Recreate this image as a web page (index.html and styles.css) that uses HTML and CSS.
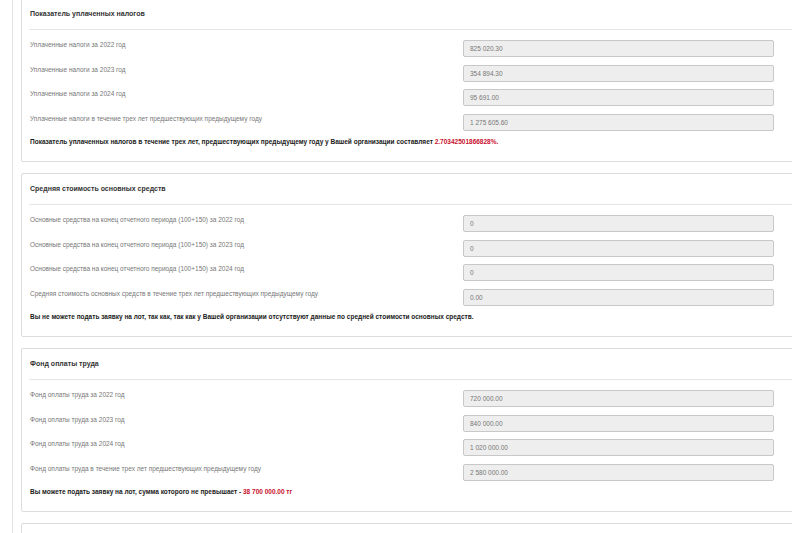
FILE: index.html
```html
<!DOCTYPE html>
<html>
  <head>
    <title>Показатели организации</title>
    <link rel="stylesheet" href="styles.css">
  </head>
  <body>
    <div class="page">
      <div class="panel">
        <div class="panel-heading">Показатель уплаченных налогов</div>
        <div class="panel-body">
          <div class="field-row">
            <label class="field-label">Уплаченные налоги за 2022 год</label>
            <div class="field-input">825 020.30</div>
          </div>
          <div class="field-row">
            <label class="field-label">Уплаченные налоги за 2023 год</label>
            <div class="field-input">354 894.30</div>
          </div>
          <div class="field-row">
            <label class="field-label">Уплаченные налоги за 2024 год</label>
            <div class="field-input">95 691.00</div>
          </div>
          <div class="field-row">
            <label class="field-label">Уплаченные налоги в течение трех лет предшествующих предыдущему году</label>
            <div class="field-input">1 275 605.60</div>
          </div>
          <p class="summary">Показатель уплаченных налогов в течение трех лет, предшествующих предыдущему году у Вашей организации составляет <span class="accent">2.70342501866828%.</span></p>
        </div>
      </div>

      <div class="panel">
        <div class="panel-heading">Средняя стоимость основных средств</div>
        <div class="panel-body">
          <div class="field-row">
            <label class="field-label">Основные средства на конец отчетного периода (100+150) за 2022 год</label>
            <div class="field-input">0</div>
          </div>
          <div class="field-row">
            <label class="field-label">Основные средства на конец отчетного периода (100+150) за 2023 год</label>
            <div class="field-input">0</div>
          </div>
          <div class="field-row">
            <label class="field-label">Основные средства на конец отчетного периода (100+150) за 2024 год</label>
            <div class="field-input">0</div>
          </div>
          <div class="field-row">
            <label class="field-label">Средняя стоимость основных средств в течение трех лет предшествующих предыдущему году</label>
            <div class="field-input">0.00</div>
          </div>
          <p class="summary">Вы не можете подать заявку на лот, так как, так как у Вашей организации отсутствуют данные по средней стоимости основных средств.</p>
        </div>
      </div>

      <div class="panel">
        <div class="panel-heading">Фонд оплаты труда</div>
        <div class="panel-body">
          <div class="field-row">
            <label class="field-label">Фонд оплаты труда за 2022 год</label>
            <div class="field-input">720 000.00</div>
          </div>
          <div class="field-row">
            <label class="field-label">Фонд оплаты труда за 2023 год</label>
            <div class="field-input">840 000.00</div>
          </div>
          <div class="field-row">
            <label class="field-label">Фонд оплаты труда за 2024 год</label>
            <div class="field-input">1 020 000.00</div>
          </div>
          <div class="field-row">
            <label class="field-label">Фонд оплаты труда в течение трех лет предшествующих предыдущему году</label>
            <div class="field-input">2 580 000.00</div>
          </div>
          <p class="summary">Вы можете подать заявку на лот, сумма которого не превышает - <span class="accent">38 700 000.00 тг</span></p>
        </div>
      </div>

      <div class="panel">
        <div class="panel-heading">&nbsp;</div>
      </div>
    </div>
  </body>
</html>
```

FILE: styles.css
```css
body {
  margin: 0;
  background-color: white;
  font-family: "Liberation Sans", Arial, Helvetica, sans-serif;
  overflow: hidden;
}

.page {
  margin-top: -2px;
  margin-left: 12px;
  padding-left: 8px;
  border-left: 1px solid #e4e4e4;
  min-height: 600px;
}

.panel {
  border: 1px solid #dcdcdc;
  border-radius: 2px;
  margin-right: -40px;
  margin-bottom: 11px;
  background-color: white;
}

.panel-heading {
  height: 30px;
  line-height: 30px;
  margin-left: 7px;
  padding-left: 1px;
  border-bottom: 1px solid #e6e6e6;
  font-size: 7px;
  font-weight: bold;
  color: #333;
}

.panel-body {
  padding: 10px 8px 14px 8px;
}

.field-row {
  display: grid;
  grid-template-columns: 433px 311px;
  margin-bottom: 7.5px;
}

.field-label {
  font-size: 6.5px;
  line-height: 9px;
  color: #777;
}

.field-input {
  box-sizing: border-box;
  height: 17px;
  line-height: 15px;
  padding-left: 6px;
  background-color: #eeeeee;
  border: 1px solid #c8c8c8;
  border-radius: 2px;
  font-size: 6.5px;
  color: #777;
}

.summary {
  margin: -1px 0 0 0;
  line-height: 10px;
  font-size: 6.5px;
  font-weight: bold;
  color: #1a1a1a;
}

.accent {
  color: #c8102e;
}
```
